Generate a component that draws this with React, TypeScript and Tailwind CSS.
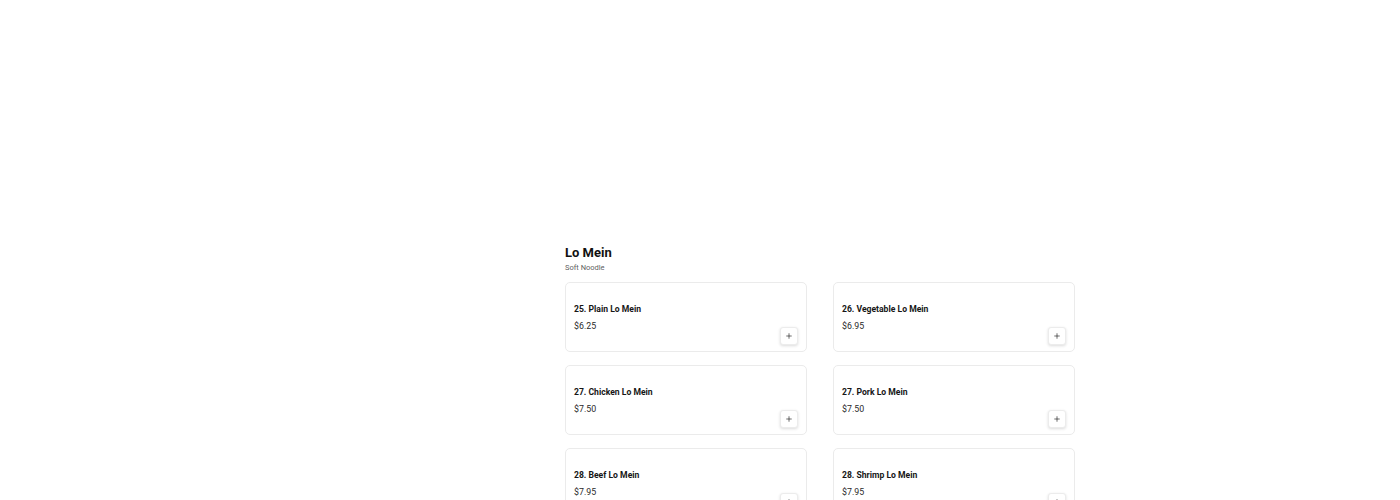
import React from "react";
import { Plus } from "lucide-react";

const items = [
  { name: "25. Plain Lo Mein", price: "$6.25" },
  { name: "26. Vegetable Lo Mein", price: "$6.95" },
  { name: "27. Chicken Lo Mein", price: "$7.50" },
  { name: "27. Pork Lo Mein", price: "$7.50" },
  { name: "28. Beef Lo Mein", price: "$7.95" },
  { name: "28. Shrimp Lo Mein", price: "$7.95" },
];

const App = () => {
  return (
    <div className="min-h-screen bg-white flex" style={{ fontFamily: "Roboto, 'Liberation Sans', sans-serif" }}>
      {/* empty side column */}
      <div className="w-[240px] shrink-0" />

      <main className="flex-1 flex justify-center pt-[244px] pb-10">
        <section className="w-[510px]">
          <h2 className="text-[13px] leading-[17px] font-bold text-[#111111]">
            Lo Mein
          </h2>
          <p className="text-[7.5px] leading-[12px] text-[#5f5f5f] mt-[1px]">
            Soft Noodle
          </p>

          <div className="grid grid-cols-2 gap-x-[26px] gap-y-[13px] mt-[8px]">
            {items.map((item, index) => (
              <MenuCard key={index} name={item.name} price={item.price} />
            ))}
          </div>
        </section>
      </main>
    </div>
  );
};

function MenuCard({ name, price }: { name: string; price: string }) {
  return (
    <div className="h-[70px] border border-[#ebebeb] rounded-[5px] flex justify-between bg-white">
      <div className="pl-[8px] pt-[20px]">
        <p className="text-[8.6px] leading-[12px] font-bold text-[#161616]">
          {name}
        </p>
        <p className="text-[8.8px] leading-[12px] text-[#2a2a2a] mt-[5px]">
          {price}
        </p>
      </div>

      <div className="flex items-end pr-[8px] pb-[6px]">
        <button className="w-[18px] h-[18px] rounded-[3px] border border-[#ececec] bg-white shadow-[0_1px_3px_rgba(0,0,0,0.14)] flex items-center justify-center text-[#222222]">
          <Plus size={8} strokeWidth={2} />
        </button>
      </div>
    </div>
  );
}

export default App;
